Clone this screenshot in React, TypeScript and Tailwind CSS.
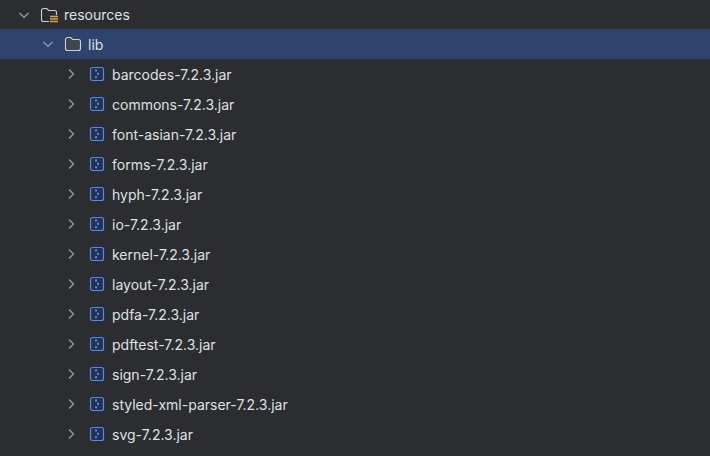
import React from 'react';

const jars = [
  'barcodes-7.2.3.jar',
  'commons-7.2.3.jar',
  'font-asian-7.2.3.jar',
  'forms-7.2.3.jar',
  'hyph-7.2.3.jar',
  'io-7.2.3.jar',
  'kernel-7.2.3.jar',
  'layout-7.2.3.jar',
  'pdfa-7.2.3.jar',
  'pdftest-7.2.3.jar',
  'sign-7.2.3.jar',
  'styled-xml-parser-7.2.3.jar',
  'svg-7.2.3.jar',
];

const Chevron = ({ open }: { open?: boolean }) => (
  <svg width="16" height="16" viewBox="0 0 16 16" fill="none" stroke="#9da0a8" strokeWidth="1.2" className="shrink-0">
    <path d={open ? 'M3.5 6l4.5 4.5L12.5 6' : 'M6 3.5l4.5 4.5L6 12.5'} />
  </svg>
);

const FolderIcon = ({ resource }: { resource?: boolean }) => (
  <svg width="18" height="16" viewBox="0 0 18 16" fill="none" className="shrink-0">
    <path
      d="M1.5 3.5a2 2 0 0 1 2-2h3.2l2 2h5.8a2 2 0 0 1 2 2v7a2 2 0 0 1-2 2h-11a2 2 0 0 1-2-2z"
      stroke="#ced0d6"
      strokeWidth="1.1"
      fill={resource ? 'none' : '#43454a'}
    />
    {resource && (
      <>
        <rect x="9" y="8" width="9" height="8" fill="#2b2d30" />
        <path d="M10 9.5h8M10 12h8M10 14.5h8" stroke="#d9a343" strokeWidth="1.4" />
      </>
    )}
  </svg>
);

const JarIcon = () => (
  <svg width="16" height="16" viewBox="0 0 16 16" fill="none" className="shrink-0">
    <rect x="1.5" y="1.5" width="13" height="13" rx="2" stroke="#548af7" strokeWidth="1.2" fill="#25324d" />
    <rect x="6" y="3.5" width="2" height="2" fill="#548af7" />
    <rect x="8" y="6.8" width="2" height="2" fill="#548af7" />
    <rect x="6" y="10.2" width="2" height="2" fill="#548af7" />
  </svg>
);

export default function App() {
  return (
    <div className="w-[710px] h-[456px] overflow-hidden bg-[#2b2d30] text-[#dfe1e5] text-[14px] font-['Inter',sans-serif]">
      <div className="h-[29px] flex items-center pl-[16px]">
        <Chevron open />
        <span className="ml-[8px]"><FolderIcon resource /></span>
        <span className="ml-[6px]">resources</span>
      </div>
      <div className="h-[30px] flex items-center pl-[40px] bg-[#2e436e]">
        <Chevron open />
        <span className="ml-[8px]"><FolderIcon /></span>
        <span className="ml-[6px]">lib</span>
      </div>
      {jars.map(jar => (
        <div key={jar} className="h-[30px] flex items-center pl-[63px]">
          <Chevron />
          <span className="ml-[10px]"><JarIcon /></span>
          <span className="ml-[7px]">{jar}</span>
        </div>
      ))}
    </div>
  );
}
